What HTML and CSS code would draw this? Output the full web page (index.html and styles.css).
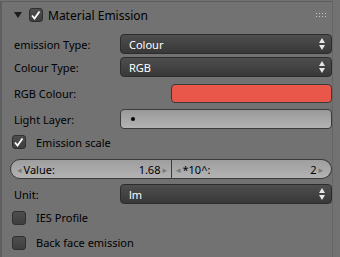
FILE: index.html
```html
<!DOCTYPE html>
<html lang="en">
<head>
  <meta charset="UTF-8">
  <title>Material Emission</title>
  <link rel="stylesheet" href="styles.css">
</head>
<body>
  <div class="panel">
    <div class="header">
      <svg class="arrow" width="8" height="8" viewBox="0 0 8 8"><path d="M0 1 L8 1 L4 7 Z" fill="#1c1c1c"/></svg>
      <span class="check on">
        <svg width="13" height="13" viewBox="0 0 13 13"><path d="M3 6.5 L5.5 9.5 L10.5 2.5" fill="none" stroke="#fff" stroke-width="1.8"/></svg>
      </span>
      <span class="title">Material Emission</span>
      <svg class="grip" width="12" height="5" viewBox="0 0 12 5">
        <g fill="#c8c8c8">
          <rect x="0" y="0" width="1" height="1"/><rect x="3" y="0" width="1" height="1"/><rect x="6" y="0" width="1" height="1"/><rect x="9" y="0" width="1" height="1"/>
          <rect x="0" y="3" width="1" height="1"/><rect x="3" y="3" width="1" height="1"/><rect x="6" y="3" width="1" height="1"/><rect x="9" y="3" width="1" height="1"/>
        </g>
      </svg>
    </div>

    <div class="row r1">
      <span class="label">emission Type:</span>
      <div class="menu">Colour<span class="updown"></span></div>
    </div>
    <div class="row r2">
      <span class="label">Colour Type:</span>
      <div class="menu">RGB<span class="updown"></span></div>
    </div>
    <div class="row r3">
      <span class="label">RGB Colour:</span>
      <div class="swatch"></div>
    </div>
    <div class="row r4">
      <span class="label">Light Layer:</span>
      <div class="layer"><span class="dot"></span></div>
    </div>
    <div class="row r5">
      <span class="check on">
        <svg width="13" height="13" viewBox="0 0 13 13"><path d="M3 6.5 L5.5 9.5 L10.5 2.5" fill="none" stroke="#fff" stroke-width="1.8"/></svg>
      </span>
      <span class="cblabel">Emission scale</span>
    </div>
    <div class="row r6">
      <div class="num left"><span class="tri">&#9666;</span><span class="nlabel">Value:</span><span class="nval">1.68</span><span class="tri">&#9656;</span></div>
      <div class="num right"><span class="tri">&#9666;</span><span class="nlabel">*10^:</span><span class="nval">2</span><span class="tri">&#9656;</span></div>
    </div>
    <div class="row r7">
      <span class="label">Unit:</span>
      <div class="menu">lm<span class="updown"></span></div>
    </div>
    <div class="row r8">
      <span class="check"></span>
      <span class="cblabel">IES Profile</span>
    </div>
    <div class="row r9">
      <span class="check"></span>
      <span class="cblabel">Back face emission</span>
    </div>
  </div>
</body>
</html>
```

FILE: styles.css
```css
html, body { margin: 0; height: 100%; }
body { background: #727272; font-family: "Noto Sans", "DejaVu Sans", sans-serif; font-size: 11px; color: #000; }

.panel { height: 257px; width: 333px; border-left: 2px solid #5e5e5e; border-right: 1px solid #656565; border-top: 1px solid #5c5c5c; margin-top: 1px; box-sizing: border-box; }

.header { height: 26px; display: flex; align-items: center; padding-left: 12px; }
.arrow { margin-right: 7px; }
.title { font-size: 12px; margin-left: 5px; flex: 1; color: #000; }
.grip { margin-right: 4px; }

.row { display: flex; align-items: center; height: 20px; padding-left: 12px; }
.r1 { margin-top: 6px; }
.r2 { margin-top: 3px; }
.r3 { margin-top: 7px; height: 19px; }
.r4 { margin-top: 6px; }
.r5 { margin-top: 5px; height: 16px; padding-left: 10px; }
.r6 { margin-top: 9px; padding-left: 8px; }
.r7 { margin-top: 5px; }
.r8 { margin-top: 5px; height: 17px; padding-left: 10px; }
.r9 { margin-top: 8px; height: 17px; padding-left: 10px; }

.label { width: 106px; flex: none; }
.r3 .label { width: 157px; }

.menu { flex: 1; height: 100%; box-sizing: border-box; border: 1px solid #2c2c2c; border-radius: 4px; background: linear-gradient(#4e4e4e, #383838); color: #fff; display: flex; align-items: center; padding-left: 8px; position: relative; }
.updown { position: absolute; right: 5px; top: 3px; width: 7px; height: 12px; }
.updown::before, .updown::after { content: ""; position: absolute; left: 0; border-left: 3.5px solid transparent; border-right: 3.5px solid transparent; }
.updown::before { top: 0; border-bottom: 5px solid #e6e6e6; }
.updown::after { bottom: 0; border-top: 5px solid #e6e6e6; }

.swatch { flex: 1; height: 100%; box-sizing: border-box; border: 1px solid #3a3a3a; border-radius: 4px; background: #e8574a; }

.layer { flex: 1; height: 100%; box-sizing: border-box; border: 1px solid #3a3a3a; border-radius: 4px; background: linear-gradient(#999, #b3b3b3); display: flex; align-items: center; padding-left: 10px; }
.dot { width: 4px; height: 4px; border-radius: 50%; background: #000; }

.check { width: 14px; height: 14px; box-sizing: border-box; border: 1px solid #2e2e2e; border-radius: 3px; background: linear-gradient(#4e4e4e, #3e3e3e); flex: none; display: flex; }
.check svg { margin: 0 -1px; }
.cblabel { margin-left: 10px; }

.num { height: 100%; box-sizing: border-box; border: 1px solid #3a3a3a; background: linear-gradient(#9e9e9e, #b3b3b3); display: flex; align-items: center; }
.num.left { width: 163px; border-radius: 10px 0 0 10px; padding-left: 6px; padding-right: 4px; }
.num.right { width: 161px; border-left: none; border-radius: 0 10px 10px 0; padding-left: 4px; padding-right: 8px; }
.tri { color: #7a7a7a; font-size: 9px; }
.nlabel { flex: 1; margin-left: 2px; }
.nval { margin-right: 2px; }
```
